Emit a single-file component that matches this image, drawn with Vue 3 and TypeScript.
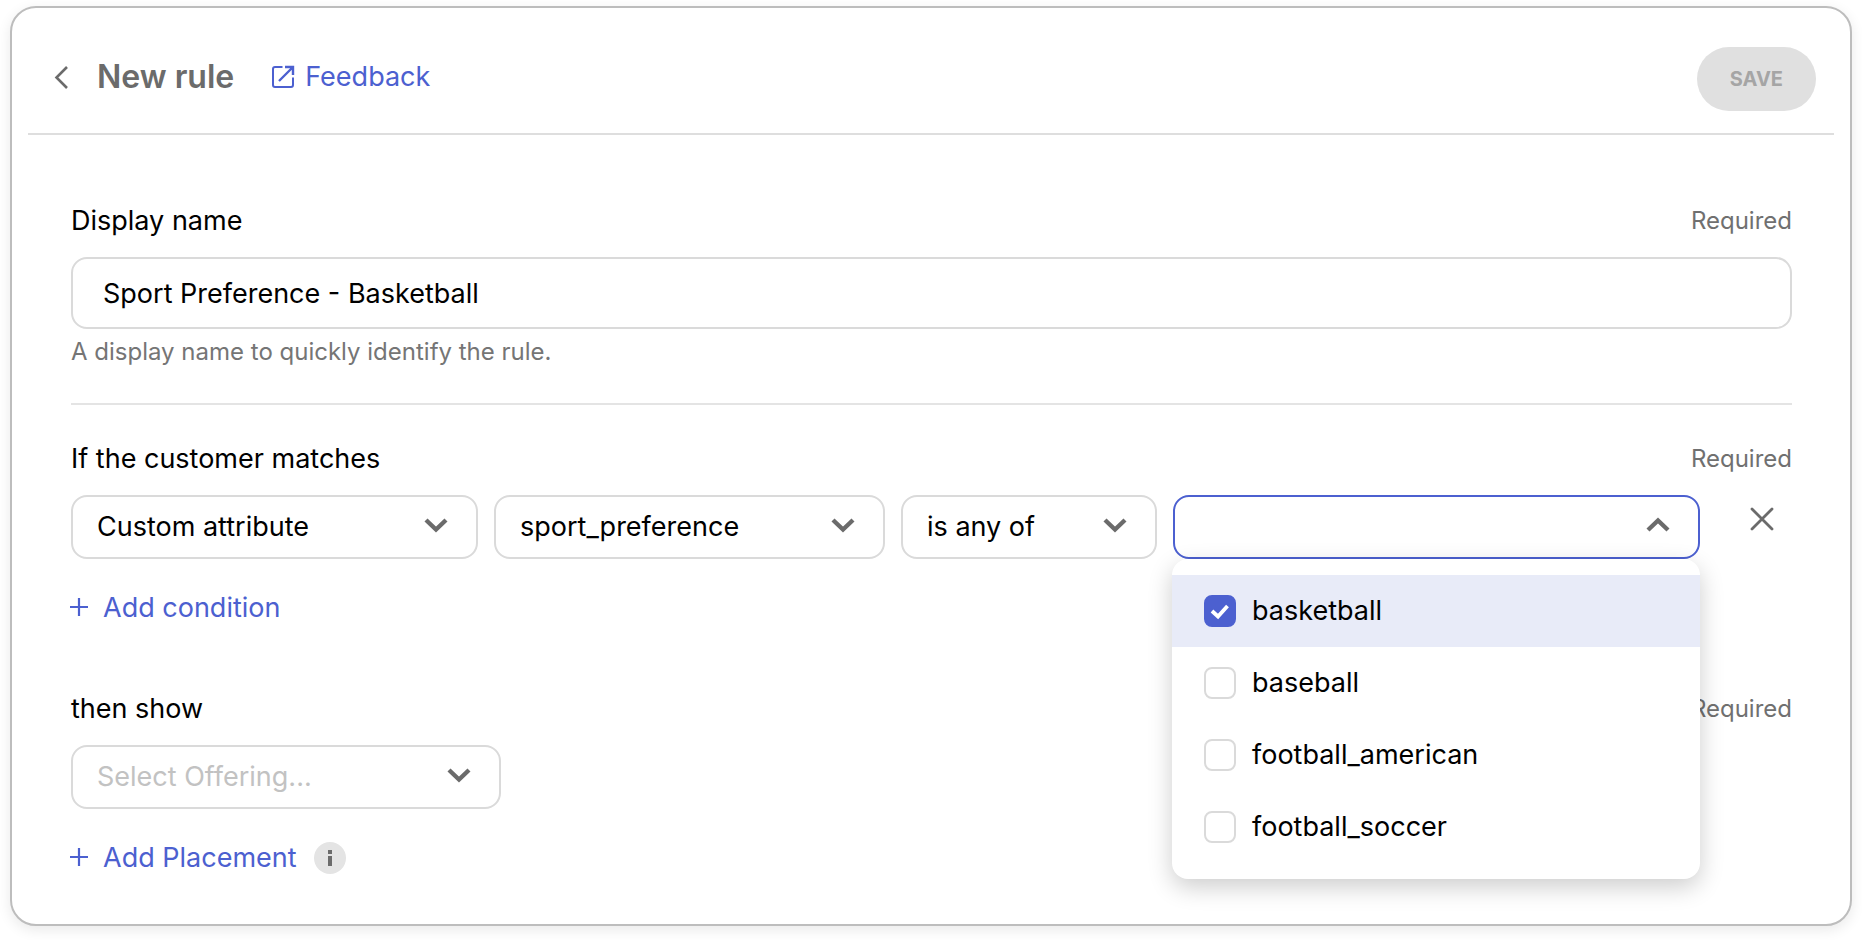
<script setup lang="ts">
import { ref } from 'vue'

interface SportOption {
  value: string
  checked: boolean
  active: boolean
}

const displayName = ref('Sport Preference - Basketball')
const menuOpen = ref(true)
const options = ref<SportOption[]>([
  { value: 'basketball', checked: true, active: true },
  { value: 'baseball', checked: false, active: false },
  { value: 'football_american', checked: false, active: false },
  { value: 'football_soccer', checked: false, active: false },
])
</script>

<template>
  <main class="card">
    <header class="header">
      <div class="heading">
        <button class="plain back" type="button" aria-label="Back">
          <svg width="16" height="28" viewBox="0 0 16 28" fill="none" stroke="currentColor" stroke-width="2.6">
            <path d="M14 4 L3.5 14.5 L14 25" />
          </svg>
        </button>
        <h1 class="title">New rule</h1>
        <a class="feedback" href="#">
          <svg width="24" height="28" viewBox="0 0 24 28" fill="none" stroke="currentColor" stroke-width="2">
            <path d="M11.5 4 H4 a2 2 0 0 0 -2 2 V22 a2 2 0 0 0 2 2 H20 a2 2 0 0 0 2 -2 V14.5" />
            <path d="M14 4 H22 V12 M22 4 L8 18" stroke-width="2.4" />
          </svg>
          <span>Feedback</span>
        </a>
      </div>
      <button class="save" type="button" disabled>SAVE</button>
    </header>

    <form class="content" @submit.prevent>
      <section>
        <div class="label-row">
          <label for="display-name">Display name</label>
          <span class="required">Required</span>
        </div>
        <input id="display-name" v-model="displayName" class="text-input" type="text" />
        <p class="hint">A display name to quickly identify the rule.</p>
      </section>

      <section class="conditions">
        <div class="label-row">
          <label for="attribute-kind">If the customer matches</label>
          <span class="required">Required</span>
        </div>
        <div class="condition-row">
          <div class="field">
            <select id="attribute-kind" class="control">
              <option>Custom attribute</option>
            </select>
            <svg class="chevron" width="26" height="18" viewBox="0 0 26 18"><path d="M3 4 L13 13.5 L23 4" /></svg>
          </div>
          <div class="field">
            <select class="control" aria-label="Attribute">
              <option>sport_preference</option>
            </select>
            <svg class="chevron" width="26" height="18" viewBox="0 0 26 18"><path d="M3 4 L13 13.5 L23 4" /></svg>
          </div>
          <div class="field">
            <select class="control" aria-label="Operator">
              <option>is any of</option>
            </select>
            <svg class="chevron" width="26" height="18" viewBox="0 0 26 18"><path d="M3 4 L13 13.5 L23 4" /></svg>
          </div>
          <div class="field">
            <button
              class="control open"
              type="button"
              aria-label="Values"
              aria-haspopup="true"
              :aria-expanded="menuOpen"
              @click="menuOpen = !menuOpen"
            ></button>
            <svg class="chevron" width="26" height="18" viewBox="0 0 26 18"><path d="M3 14 L13 4.5 L23 14" /></svg>
            <div v-if="menuOpen" class="menu">
              <label v-for="option in options" :key="option.value" class="option" :class="{ active: option.active }">
                <span class="box">
                  <input v-model="option.checked" class="check" type="checkbox" />
                  <svg v-if="option.checked" class="tick" width="32" height="32" viewBox="0 0 32 32">
                    <path d="M8 16 L14 21.5 L23.5 11" />
                  </svg>
                </span>
                <span>{{ option.value }}</span>
              </label>
            </div>
          </div>
          <button class="plain remove" type="button" aria-label="Remove condition">
            <svg width="26" height="26" viewBox="0 0 26 26" fill="none" stroke="currentColor" stroke-width="2.8" stroke-linecap="round">
              <path d="M3 3 L23 23 M23 3 L3 23" />
            </svg>
          </button>
        </div>
        <div class="add-row">
          <button class="plain add" type="button">
            <svg width="20" height="20" viewBox="0 0 20 20" stroke="currentColor" stroke-width="2.2">
              <path d="M10 0 V18 M1 9 H19" />
            </svg>
            <span>Add condition</span>
          </button>
        </div>
      </section>

      <section class="outcome">
        <div class="label-row">
          <label for="offering">then show</label>
          <span class="required">Required</span>
        </div>
        <div class="field offering">
          <select id="offering" class="control placeholder">
            <option>Select Offering...</option>
          </select>
          <svg class="chevron" width="26" height="18" viewBox="0 0 26 18"><path d="M3 4 L13 13.5 L23 4" /></svg>
        </div>
        <div class="add-row">
          <button class="plain add" type="button">
            <svg width="20" height="20" viewBox="0 0 20 20" stroke="currentColor" stroke-width="2.2">
              <path d="M10 0 V18 M1 9 H19" />
            </svg>
            <span>Add Placement</span>
          </button>
          <button class="plain info" type="button" aria-label="About placements">
            <svg width="32" height="32" viewBox="0 0 32 32" fill="currentColor">
              <rect x="14" y="8" width="4" height="4" />
              <rect x="14" y="14" width="4" height="10" />
            </svg>
          </button>
        </div>
      </section>
    </form>
  </main>
</template>

<style>
body {
  background: #fff;
}
</style>

<style scoped>
.card {
  box-sizing: border-box;
  margin: 6px 10px 14px;
  border: 2px solid #bdbdbd;
  border-radius: 26px;
  background: #fff;
  box-shadow: 0 4px 14px rgba(0, 0, 0, 0.09);
  padding: 0 16px;
  font-family: Inter, "Liberation Sans", sans-serif;
  font-size: 27px;
  line-height: 32px;
  color: #000;
}

.plain {
  border: 0;
  padding: 0;
  background: none;
  font: inherit;
  color: #6b6b6b;
  cursor: pointer;
}

.plain svg {
  display: block;
}

.header {
  display: flex;
  justify-content: space-between;
  align-items: flex-start;
  padding: 39px 18px 22px 25px;
  border-bottom: 2px solid #dedede;
}

.heading {
  display: flex;
  align-items: center;
  height: 60px;
}

.title {
  margin: 0 37px 0 28px;
  font-size: 32px;
  font-weight: 600;
  color: #6b6b6b;
}

.feedback {
  display: flex;
  align-items: center;
  gap: 10px;
  color: #4c60d0;
  text-decoration: none;
}

.save {
  height: 64px;
  padding: 0 33px;
  border: 0;
  border-radius: 32px;
  background: #e0e0e0;
  color: #a5a5a5;
  font: 700 20px/32px Inter, "Liberation Sans", sans-serif;
}

.content {
  padding: 70px 42px 50px 43px;
}

.label-row {
  display: flex;
  justify-content: space-between;
  margin-bottom: 20px;
}

.required {
  font-size: 24px;
  color: #707070;
}

.text-input {
  display: block;
  box-sizing: border-box;
  width: 100%;
  height: 72px;
  padding: 0 30px;
  border: 2px solid #dadada;
  border-radius: 16px;
  background: #fff;
  font: inherit;
  color: inherit;
}

.hint {
  margin: 7px 0 35px;
  font-size: 24px;
  color: #757575;
}

.conditions {
  padding-top: 38px;
  border-top: 2px solid #e4e4e4;
}

.condition-row {
  display: grid;
  grid-template-columns: 407fr 391fr 256fr 527fr 76px;
  gap: 16px;
}

.field {
  position: relative;
  min-width: 0;
}

.control {
  display: block;
  box-sizing: border-box;
  width: 100%;
  height: 64px;
  padding: 0 64px 0 24px;
  border: 2px solid #dadada;
  border-radius: 16px;
  background: #fff;
  appearance: none;
  font: inherit;
  color: inherit;
}

.control.open {
  border-color: #4c60d0;
}

.control.placeholder {
  color: #c2c2c2;
}

.chevron {
  position: absolute;
  top: 21px;
  right: 29px;
  fill: none;
  stroke: #6b6b6b;
  stroke-width: 4.4;
  pointer-events: none;
}

.menu {
  position: absolute;
  z-index: 2;
  top: 100%;
  left: -1px;
  right: 0;
  padding: 16px 0;
  border-radius: 16px;
  background: #fff;
  box-shadow: 0 8px 24px rgba(0, 0, 0, 0.2);
}

.option {
  display: flex;
  align-items: center;
  gap: 16px;
  height: 72px;
  padding: 0 32px;
}

.option.active {
  background: #e8ebf8;
}

.box {
  position: relative;
  width: 32px;
  height: 32px;
}

.check {
  display: block;
  box-sizing: border-box;
  width: 32px;
  height: 32px;
  margin: 0;
  border: 2px solid #dadada;
  border-radius: 8px;
  background: #fff;
  appearance: none;
}

.check:checked {
  border-color: #4c60d0;
  background: #4c60d0;
}

.tick {
  position: absolute;
  top: 0;
  left: 0;
  fill: none;
  stroke: #fff;
  stroke-width: 3.8;
  pointer-events: none;
}

.remove {
  display: grid;
  place-items: center;
  justify-self: end;
  width: 60px;
  height: 48px;
}

.add-row {
  display: flex;
  align-items: center;
  gap: 17px;
  margin: 33px 0 0 -2px;
}

.add {
  display: flex;
  align-items: center;
  gap: 14px;
  color: #4c60d0;
}

.outcome {
  margin-top: 69px;
}

.offering {
  width: 25%;
}

.info {
  width: 32px;
  height: 32px;
  border-radius: 50%;
  background: #e4e4e4;
}
</style>
